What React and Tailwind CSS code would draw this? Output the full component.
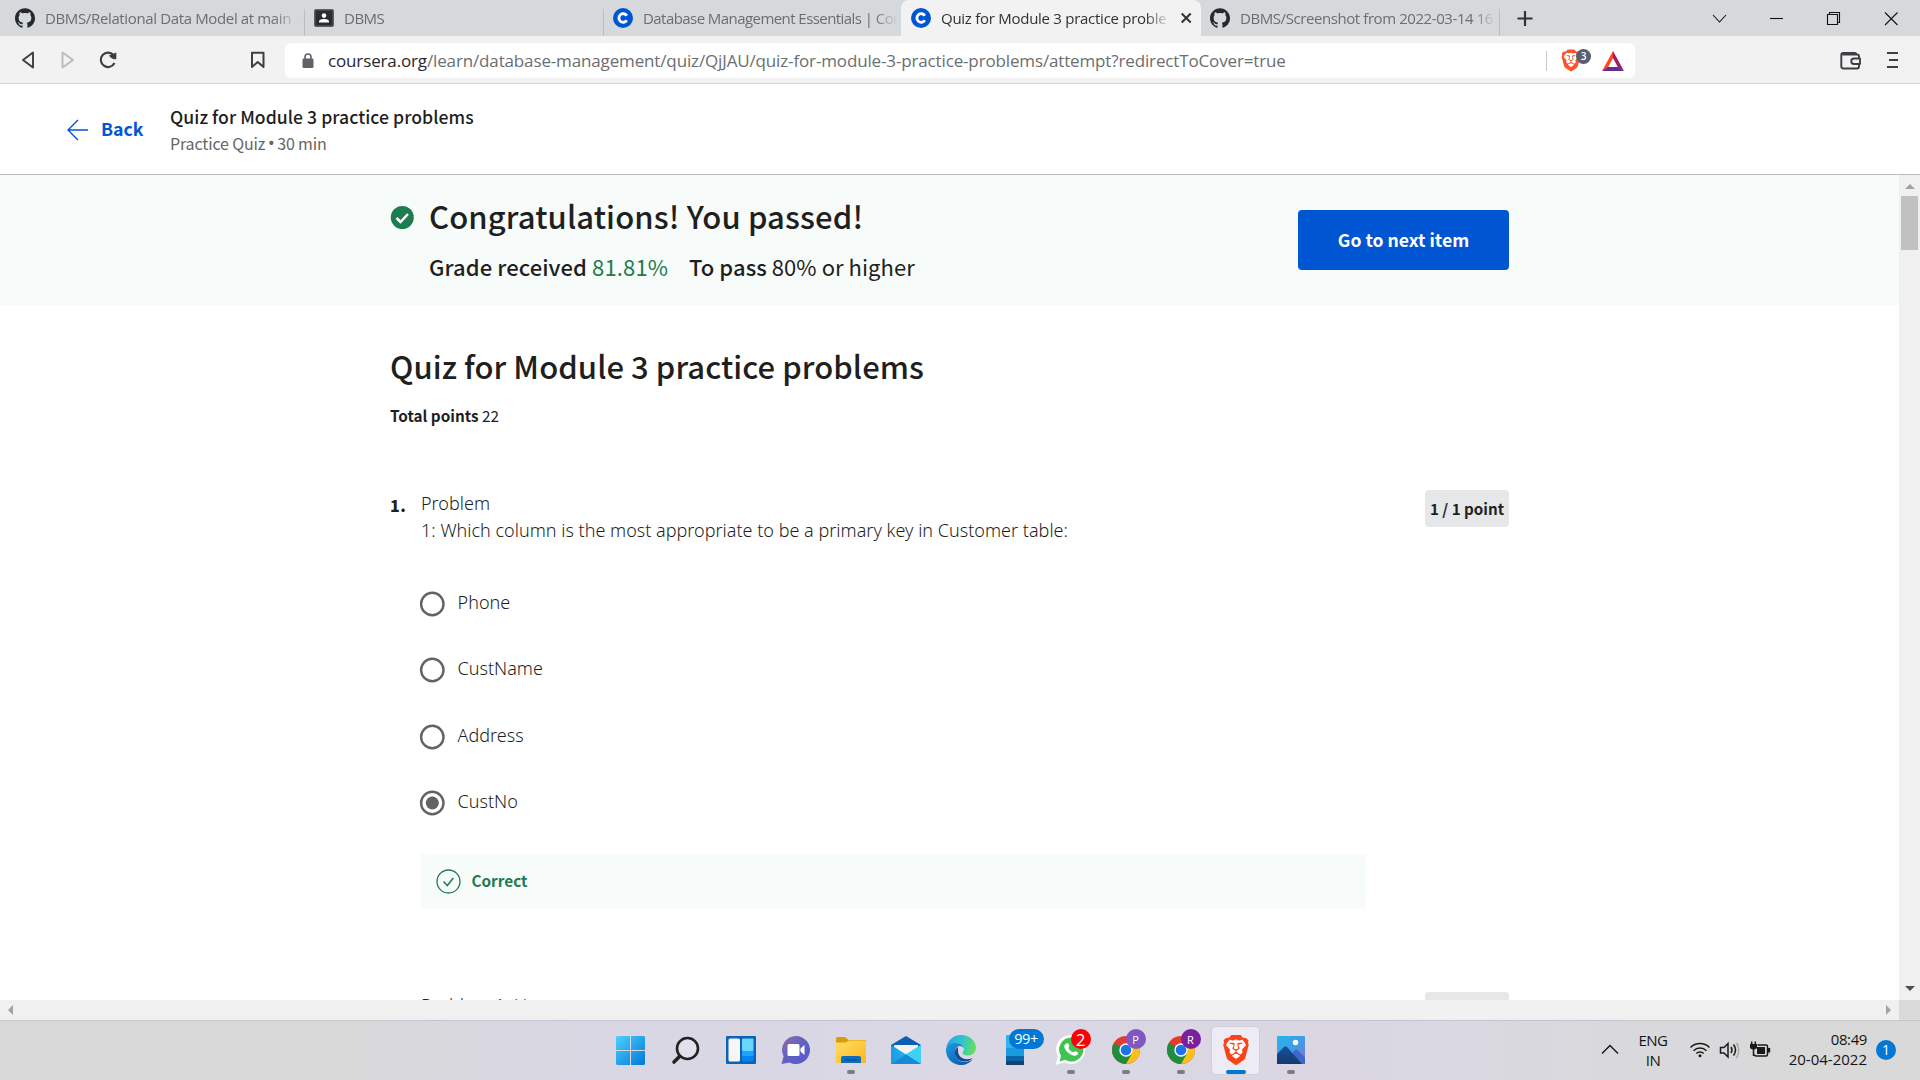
import React from 'react';
import { SiGithub, SiBrave } from 'react-icons/si';

const UI = "font-['Open_Sans','Noto_Sans',sans-serif]";
const SRC = "font-['Noto_Sans_CJK_SC','Noto_Sans',sans-serif]";
const BODY = "font-['Noto_Sans','Open_Sans',sans-serif]";

function CourseraIcon() {
  return (
    <svg width="20" height="20" viewBox="0 0 20 20" className="shrink-0">
      <circle cx="10" cy="10" r="10" fill="#0056d2" />
      <path d="M13.800 7.700A4.300 4.300 0 1 0 13.800 12.300" fill="none" stroke="#fff" strokeWidth="2.800" />
    </svg>
  );
}

function ContactIcon() {
  return (
    <svg width="20" height="18" viewBox="0 0 20 18" className="shrink-0">
      <rect width="20" height="18" rx="2" fill="#5c5f62" />
      <rect x="1.500" y="1.500" width="17" height="15" fill="#2a2c2e" />
      <circle cx="10" cy="6.600" r="2.300" fill="#fff" />
      <path d="M5 13.500v-1c0-1.800 3-2.500 5-2.500s5 .7 5 2.500v1z" fill="#fff" />
    </svg>
  );
}

function Tab({ icon, children, className }) {
  return (
    <div className={`flex h-[36px] shrink-0 items-center ${className}`}>
      {icon}
      <div className="ml-[10px] min-w-0 flex-1 overflow-hidden whitespace-nowrap leading-[22px] [mask-image:linear-gradient(to_right,black_calc(100%-24px),transparent)]">
        {children}
      </div>
    </div>
  );
}

function TabStrip() {
  return (
    <div className={`flex h-[36px] items-start bg-[#d5d9dc] text-[15px] text-[#6a6e72] ${UI}`}>
      <Tab className="w-[304px] pl-[15px] pr-[6px]" icon={<SiGithub size={20} color="#24292f" className="shrink-0" />}>
        <span className="tracking-[-0.36px]">DBMS/Relational Data Model at main ·</span>
      </Tab>
      <div className="mt-[9px] h-[27px] w-px bg-[#babfc3]" />
      <Tab className="w-[298px] pl-[9px] pr-[8px]" icon={<ContactIcon />}>
        <span className="tracking-[-0.5px]">DBMS</span>
      </Tab>
      <div className="mt-[9px] h-[27px] w-px bg-[#babfc3]" />
      <Tab className="w-[297px] pl-[9px] pr-[3px]" icon={<CourseraIcon />}>
        <span className="tracking-[-0.56px]">Database Management Essentials | Cou</span>
      </Tab>
      <div className="flex h-[36px] w-[300px] items-center rounded-t-[8px] bg-[#f2f2f2] text-[#303236]">
        <Tab className="w-[271px] pl-[10px] pr-[2px]" icon={<CourseraIcon />}>
          <span className="font-medium tracking-[-0.27px]">Quiz for Module 3 practice proble</span>
        </Tab>
        <svg width="28" height="20" viewBox="0 0 28 20">
          <path d="M9.700 5.500l9 9M18.700 5.500l-9 9" stroke="#303236" strokeWidth="2" />
        </svg>
      </div>
      <Tab className="w-[298px] pl-[9px] pr-[3px]" icon={<SiGithub size={20} color="#24292f" className="shrink-0" />}>
        <span className="tracking-[-0.42px]">DBMS/Screenshot from 2022-03-14 16</span>
      </Tab>
      <div className="mt-[9px] h-[27px] w-px bg-[#babfc3]" />
      <svg width="50" height="36" viewBox="0 0 50 36">
        <path d="M25 11v15M17.500 18.500h15" stroke="#303236" strokeWidth="2.200" />
      </svg>
      <svg width="226" height="36" viewBox="1694 0 226 36" className="ml-auto" fill="none" stroke="#111" strokeWidth="1.100">
        <path d="M1713 15l6.500 7 6.500-7" />
        <path d="M1770 18.500h13" />
        <path d="M1827.500 14.500h10v10h-10zM1829.500 14.500v-2h10v10h-2" />
        <path d="M1885 12.500l12.500 12.500M1897.500 12.500l-12.500 12.500" />
      </svg>
    </div>
  );
}

function Toolbar() {
  return (
    <div className={`flex h-[48px] items-center border-b border-[#d3d5d6] bg-[#f2f2f2] pt-[2px] ${UI}`}>
      <svg width="285" height="35" viewBox="0 43 285 35" fill="none" strokeWidth="1.900" strokeLinejoin="round">
        <path d="M33 52.500v15L23 60z" stroke="#3b3e42" />
        <path d="M62.500 52.500v15l10.500-7.500z" stroke="#b9bbbd" />
        <path d="M113.800 55.500A7.200 7.200 0 1 0 114.500 63" stroke="#3b3e42" strokeWidth="2.200" />
        <path d="M109 55.500l7.300-3v6.500c-3 .8-5.500-1-7.300-3.500z" fill="#3b3e42" />
        <path d="M252 52.800h11.500V67l-5.750-5-5.750 5z" stroke="#3b3e42" strokeWidth="2" />
      </svg>
      <div className="flex h-[35px] w-[1350px] items-center rounded-[6px] bg-white">
        <svg width="12" height="16" viewBox="0 0 12 16" className="ml-[17px]">
          <rect x="0.500" y="5.500" width="11" height="9.500" rx="1.300" fill="#5f6368" />
          <path d="M3 6V4a3 3 0 0 1 6 0v2" fill="none" stroke="#5f6368" strokeWidth="1.600" />
        </svg>
        <div className="ml-[14px] flex-1 whitespace-nowrap pt-px text-[17px] leading-[26px] tracking-[-0.143px] text-[#6b6e72]">
          <span className="text-[#27292c]">coursera.org</span>/learn/database-management/quiz/QjJAU/quiz-for-module-3-practice-problems/attempt?redirectToCover=true
        </div>
        <div className="h-[20px] w-px bg-[#c6c8ca]" />
        <div className="relative ml-[13px] flex h-[24px] w-[22px] items-center justify-center">
          <svg width="20" height="24" viewBox="0 0 20 24" className="absolute left-px top-0">
            <path d="M3 5h14v9l-7 7-7-7z" fill="#fff" />
          </svg>
          <SiBrave size={23} color="#fb542b" className="relative" />
          <div className="absolute left-[16px] top-[0px] flex h-[15px] w-[15px] items-center justify-center rounded-full bg-[#5b5d70] text-[10px] font-semibold leading-none text-white">3</div>
        </div>
        <svg width="22" height="20" viewBox="0 0 22 20" className="ml-[20px] mr-[11px]">
          <path d="M11 0L0 20l6-3.500L11 7z" fill="#ff4724" />
          <path d="M11 0l11 20-6-3.500L11 7z" fill="#9e1f63" />
          <path d="M0 20h22l-6-4H6z" fill="#662d91" />
        </svg>
      </div>
      <svg width="80" height="35" viewBox="1830 43 80 35" className="ml-auto mr-[10px]" fill="none" stroke="#3b3e42" strokeWidth="1.900" strokeLinejoin="round">
        <path d="M1859 58v-1.500a2 2 0 0 0-2-2h-14.500M1859 64v2.500a2 2 0 0 1-2 2h-13.500a2.200 2.200 0 0 1-2.200-2.200V55a2 2 0 0 1 2-2h11.500a2 2 0 0 1 2 1.700" />
        <path d="M1860 58.500h-6a2.500 2.500 0 0 0 0 5.500h6z" />
        <path d="M1887 53h11M1889 60h9M1887 67h11" strokeWidth="2" />
      </svg>
    </div>
  );
}

function QuizHeader() {
  return (
    <header className={`flex h-[91px] border-b border-[#b9bbbb] bg-white ${SRC}`}>
      <svg width="22" height="22" viewBox="0 0 22 22" fill="none" stroke="#0056d2" strokeWidth="1.400" className="ml-[67px] mt-[34.500px]">
        <path d="M1 11h20M11 1L1 11l10 10" />
      </svg>
      <div className="ml-[12px] mt-[29px] w-[69px] text-[17.700px] font-bold leading-[30px] text-[#0056d2]">Back</div>
      <div className="mt-[19px]">
        <div className="text-[17.600px] font-medium leading-[27px] tracking-[0.050px] text-[#1f1f1f]">Quiz for Module 3 practice problems</div>
        <div className="flex text-[16px] leading-[26px] tracking-[-0.150px] text-[#666]">
          <span>Practice Quiz</span>
          <span className="w-[12px] text-center font-['Open_Sans',sans-serif] text-[19px]">•</span>
          <span>30 min</span>
        </div>
      </div>
    </header>
  );
}

function Banner() {
  return (
    <section className={`flex h-[130px] bg-[#f7fbf9] pl-[390px] text-[#1f1f1f] ${SRC}`}>
      <svg width="24" height="24" viewBox="0 0 24 24" className="mt-[30px] shrink-0">
        <circle cx="12.300" cy="12.500" r="11.500" fill="#1d7c50" />
        <path d="M6.500 13l4 4 7.500-8" fill="none" stroke="#fff" strokeWidth="2.500" />
      </svg>
      <div className="ml-[15px] w-[869px] pt-[21px]">
        <h1 className="text-[31px] font-medium leading-[40px] tracking-[0.120px]">Congratulations! You passed!</h1>
        <div className="mt-[14px] flex whitespace-nowrap text-[22px] leading-[32px]">
          <div className="w-[260px]">
            <span className="font-medium tracking-[0.100px]">Grade received</span> <span className="tracking-[0.150px] text-[#1d7c50]">81.81%</span>
          </div>
          <div className="tracking-[0.050px]">
            <span className="font-medium">To pass</span> 80% or higher
          </div>
        </div>
      </div>
      <button className="mt-[35px] h-[60px] w-[211px] rounded-[4px] bg-[#0056d2] text-[17.600px] font-bold text-white">
        Go to next item
      </button>
    </section>
  );
}

function Radio({ on }) {
  return (
    <svg width="26" height="26" viewBox="0 0 26 26" className="shrink-0">
      <circle cx="13.300" cy="13" r="11.200" fill="none" stroke="#636363" strokeWidth="2.400" />
      {on && <circle cx="13.300" cy="13" r="6.500" fill="#636363" />}
    </svg>
  );
}

function PointBadge() {
  return (
    <div className={`ml-auto flex h-[37px] w-[84px] items-center justify-center rounded-[4px] bg-[#e5e7e8] text-[15.200px] font-bold text-[#1f1f1f] ${SRC}`}>
      1 / 1 point
    </div>
  );
}

const OPTIONS = ['Phone', 'CustName', 'Address', 'CustNo'];

function Quiz() {
  return (
    <section className="ml-[390px] w-[1119px] text-[#1f1f1f]">
      <h2 className={`mt-[41px] text-[31px] font-medium leading-[40px] tracking-[0.060px] ${SRC}`}>Quiz for Module 3 practice problems</h2>
      <div className={`mt-[17px] text-[15.300px] leading-[24px] ${SRC}`}>
        <span className="font-bold">Total points</span> 22
      </div>
      <div className="mt-[63px] flex items-start">
        <div className={`w-[31px] pt-[2px] text-[16px] font-black leading-[27px] tracking-[0.600px] ${SRC}`}>1.</div>
        <div className={`whitespace-pre-line text-[18px] font-light leading-[27px] tracking-[0.010px] ${BODY}`}>
          Problem{'\n'}1: Which column is the most appropriate to be a primary key in Customer table:
        </div>
        <PointBadge />
      </div>
      <div className="ml-[29px] mt-[26.800px]">
        {OPTIONS.map((o) => (
          <label key={o} className="flex h-[66.400px] items-center">
            <Radio on={o === 'CustNo'} />
            <span className={`ml-[12.600px] pb-[3px] text-[18px] font-light leading-[27px] ${BODY}`}>{o}</span>
          </label>
        ))}
      </div>
      <div className="ml-[31px] mt-[17.600px] flex h-[55px] w-[945px] items-center bg-[#f7fbf9] pl-[15px] text-[#1d7c50]">
        <svg width="25" height="25" viewBox="0 0 25 25" fill="none" stroke="#1d7c50" strokeWidth="1.300">
          <circle cx="12.500" cy="12.500" r="11.500" />
          <path d="M7.500 12.500l3.800 4 6-7.500" strokeWidth="1.500" />
        </svg>
        <span className={`ml-[10.500px] pb-[2px] text-[15.300px] font-bold ${SRC}`}>Correct</span>
      </div>
      <div className="mt-[83px] flex items-start">
        <div className={`ml-[31px] text-[18px] font-light leading-[27px] ${BODY}`}>Problem 1: U</div>
        <PointBadge />
      </div>
    </section>
  );
}

function Badge({ children, className }) {
  return (
    <span className={`absolute flex items-center justify-center leading-none text-white ${UI} ${className}`}>{children}</span>
  );
}

function Task({ children, dot }) {
  return (
    <div className="flex h-[59px] w-[55px] flex-col items-center">
      <div className="relative mt-[13px] flex h-[32px] w-[32px] items-center justify-center">{children}</div>
      {dot && <div className="mt-[4px] h-[4px] w-[8px] rounded-full bg-[#7d7b82]" />}
    </div>
  );
}

function Chrome() {
  return (
    <svg width="28" height="28" viewBox="0 0 28 28">
      <circle cx="14" cy="14" r="14" fill="#e33b2e" />
      <path d="M14 14L1.900 7A14 14 0 0 0 14 28l6.100-10.500z" fill="#1e8e3e" />
      <path d="M14 14V7h12.100A14 14 0 0 1 14 28l6-10.500z" fill="#fbc116" />
      <circle cx="14" cy="14" r="6.700" fill="#fff" />
      <circle cx="14" cy="14" r="5.300" fill="#1a73e8" />
    </svg>
  );
}

function Taskbar() {
  return (
    <footer className={`flex h-[60px] border-t border-[#c6c5cd] bg-[linear-gradient(90deg,#d9d9d9_0%,#d9d9da_18%,#d9d7e3_30%,#dbd7e5_50%,#dad7e3_70%,#d9d9dc_86%,#d9d9d9_100%)] ${UI}`}>
      <svg width="0" height="0" className="absolute">
        <defs>
          <linearGradient id="win" gradientUnits="userSpaceOnUse" x1="0" y1="0" x2="29" y2="29"><stop offset="0" stopColor="#4fd0ff" /><stop offset="1" stopColor="#0078d4" /></linearGradient>
          <linearGradient id="chat" x1="0" y1="0" x2="1" y2="1"><stop offset="0" stopColor="#8f6aa8" /><stop offset="0.600" stopColor="#5b5fc7" /><stop offset="1" stopColor="#5a5bd0" /></linearGradient>
          <linearGradient id="fold" x1="0" y1="0" x2="1" y2="1"><stop offset="0" stopColor="#ffdc6b" /><stop offset="1" stopColor="#fbb917" /></linearGradient>
          <linearGradient id="mail" x1="0" y1="0" x2="1" y2="0"><stop offset="0" stopColor="#1b9de2" /><stop offset="1" stopColor="#2bc4f0" /></linearGradient>
          <linearGradient id="edgeTop" x1="0" y1="0.300" x2="1" y2="0.500"><stop offset="0" stopColor="#2aa5e0" /><stop offset="0.500" stopColor="#2fc3cf" /><stop offset="1" stopColor="#66e05c" /></linearGradient>
          <linearGradient id="edgeBot" x1="0" y1="0" x2="1" y2="1"><stop offset="0" stopColor="#1a9be6" /><stop offset="1" stopColor="#0c4d9e" /></linearGradient>
          <linearGradient id="photo" x1="0" y1="0" x2="1" y2="1"><stop offset="0" stopColor="#26b3ee" /><stop offset="0.500" stopColor="#3d9fe6" /><stop offset="1" stopColor="#8a6fd0" /></linearGradient>
          <linearGradient id="mount" x1="0" y1="0" x2="0" y2="1"><stop offset="0" stopColor="#1c4f9c" /><stop offset="1" stopColor="#123a70" /></linearGradient>
        </defs>
      </svg>
      <div className="ml-[603px] flex">
        <Task>
          <svg width="29" height="29" viewBox="0 0 29 29" fill="url(#win)">
            <path d="M1 0h13v14H0V1zM15 0h13l1 1v13H15zM0 15h14v14H1l-1-1zM15 15h14v13l-1 1H15z" />
          </svg>
        </Task>
        <Task>
          <svg width="30" height="30" viewBox="0 0 30 30" fill="none" stroke="#222" strokeLinecap="round">
            <circle cx="16.500" cy="13.500" r="10.500" strokeWidth="2.600" fill="#e2e0e8" />
            <path d="M8.500 21.500L3 27" strokeWidth="3.600" />
          </svg>
        </Task>
        <Task>
          <svg width="30" height="28" viewBox="0 0 30 28">
            <rect width="30" height="28" rx="1" fill="#0b63b5" />
            <rect x="2.500" y="2.500" width="11.500" height="23" rx="1.500" fill="#f7f7f7" />
            <rect x="16" y="2.500" width="11.500" height="12.500" rx="1" fill="#69d6ff" />
            <rect x="16" y="15" width="11.500" height="5" fill="#1ba4ff" />
            <rect x="16" y="20" width="11.500" height="5.500" rx="1" fill="#0683ea" />
          </svg>
        </Task>
        <Task>
          <svg width="30" height="28" viewBox="0 0 30 28">
            <path d="M15 0a14 14 0 1 1-6.500 26.400L0.500 28l2.100-7.500A14 14 0 0 1 15 0z" fill="url(#chat)" />
            <rect x="6.500" y="8" width="12" height="12" rx="1.500" fill="#fff" />
            <path d="M19.500 12.500l4-3.500v10l-4-3.500z" fill="#fff" />
          </svg>
        </Task>
        <Task dot>
          <svg width="30" height="27" viewBox="0 0 30 27">
            <path d="M0 1.500Q0 0 1.500 0H9l3.500 3H30v4H0z" fill="#dd9b08" />
            <path d="M0 5.500h10l3-2H30V26H0z" fill="url(#fold)" />
            <path d="M5 26v-5q0-2 2-2h16q2 0 2 2v5z" fill="#0f6cbd" />
            <rect x="8.500" y="22.300" width="13" height="1.200" fill="#0a4a8a" />
          </svg>
        </Task>
        <Task>
          <svg width="30" height="28" viewBox="0 0 30 28">
            <path d="M0 9L15 0l15 9v5H0z" fill="#0a5fb4" />
            <path d="M3 9h24v9H3z" fill="#f2f2f2" />
            <path d="M0 9l15 9.500L30 9v19H0z" fill="url(#mail)" />
            <path d="M15 18.500L30 9v19z" fill="#3fd0f5" />
            <path d="M0 28h30L15 18.500z" fill="#1789d6" />
          </svg>
        </Task>
        <Task>
          <svg width="30" height="30" viewBox="0 0 30 30">
            <path d="M0.500 12C2 4.500 8 0 15 0c8.500 0 15 6 15 12.500 0 5-3.500 8-8 8-3.500 0-5.500-1-5.500-2.500 0-1 1.500-1.500 1.500-4 0-3-3-5.500-7-5.500-4 0-8.500 2-10.500 3.500z" fill="url(#edgeTop)" />
            <path d="M0 15c0-4 4-7 9.500-7 5 0 8.500 3 8.500 6 0-1.500-2-3-4-3-3.500 0-5 3.500-5 7 0 7 6.500 9.500 11 9 2.500-.3 5-1.500 6.500-2.500-2.500 3.500-7 5.500-11.500 5.500C6.500 30 0 23.500 0 15z" fill="url(#edgeBot)" />
            <path d="M12 12c-3 2-3.500 5-3 7.500 1 5 6 7.700 11 7 3-.5 6-2.500 6.500-3.500-1.500.8-3.500 1.200-5.500 1.200-5.500 0-9-4-9-8 0-2 0-3 0-4.200z" fill="#0e4c96" />
          </svg>
        </Task>
        <Task>
          <svg width="18" height="30" viewBox="0 0 18 30" className="mr-px">
            <rect width="18" height="30" rx="1" fill="#34b3e8" />
            <rect y="13" width="18" height="8.500" fill="#1a9be0" />
            <rect y="21" width="18" height="5.500" fill="#0b63a8" />
            <rect y="26" width="18" height="4" fill="#16406e" />
          </svg>
          <Badge className="left-[9px] top-[-5px] h-[20px] w-[35px] rounded-full bg-[#0078d4] text-[14.500px] tracking-[-0.500px]">99+</Badge>
        </Task>
        <Task dot>
          <svg width="32" height="32" viewBox="0 0 32 32" className="absolute">
            <path d="M16.500 1a14.500 14.500 0 1 1-7 27.500L.5 31l2.500-8.500A14.500 14.500 0 0 1 16.500 1z" fill="#fff" />
            <path d="M16.500 3.500a12 12 0 1 1-6.300 22.300L4.500 27.500 6 21.800A12 12 0 0 1 16.500 3.500z" fill="#3fc351" />
            <path d="M11.500 9.500c1.500-.6 2 0 2.800 2.300.4 1.200-1.300 1.700-.8 2.500 1 1.800 2.500 3.200 4.500 4 .9.400 1.400-1.400 2.300-1.100 2.500.9 3 1.300 2.700 2.300-.6 2-2.800 2.600-5 1.900-4-1.200-7-3.900-8.600-7.900-.6-1.600.3-3.400 2.100-4z" fill="#fff" />
          </svg>
          <Badge className="left-[16px] top-[-5px] h-[20px] w-[20px] rounded-full bg-[#fb0007] text-[17px]">2</Badge>
        </Task>
        <Task dot>
          <Chrome />
          <Badge className="left-[16px] top-[-5px] h-[20px] w-[20px] rounded-full bg-[#7e57c2] text-[11px] text-[#eadcff]">P</Badge>
        </Task>
        <Task dot>
          <Chrome />
          <Badge className="left-[16px] top-[-5px] h-[20px] w-[20px] rounded-full bg-[#7b1fa2] text-[11px] text-[#eadcff]">R</Badge>
        </Task>
        <div className="mx-[3px] mt-[5px] flex h-[49px] w-[49px] flex-col items-center rounded-[5px] border border-[#d3d0db] bg-[#edebf3]">
          <div className="relative mt-[7px] flex h-[32px] w-[32px] items-center justify-center">
            <svg width="24" height="28" viewBox="0 0 24 28" className="absolute">
              <path d="M4 5h16v12l-8 7-8-7z" fill="#fff" />
            </svg>
            <SiBrave size={30} color="#fb4319" className="relative" />
          </div>
          <div className="mt-[4px] h-[4px] w-[20px] rounded-full bg-[#0078d4]" />
        </div>
        <Task dot>
          <svg width="28" height="28" viewBox="0 0 28 28">
            <rect width="28" height="28" rx="1" fill="url(#photo)" />
            <path d="M13 20l5-6q1.300-1 2.500 0l7.500 7.500V28H13z" fill="#3f66c9" />
            <path d="M0 18l7-7q1.500-1.300 3 0l15 17H0z" fill="url(#mount)" />
            <circle cx="18.500" cy="6.500" r="2.700" fill="#fff" />
          </svg>
        </Task>
      </div>
      <div className="ml-auto flex items-start text-[15px] leading-[20px] text-[#151515]">
        <svg width="20" height="60" viewBox="1600 1020 20 60" fill="none" stroke="#151515" strokeWidth="1.400" className="-mt-px">
          <path d="M1602 1053.500l8-8 8 8" />
        </svg>
        <div className="ml-[15px] mt-[9px] w-[36px] text-center tracking-[-0.500px]">
          <div>ENG</div>
          <div>IN</div>
        </div>
        <svg width="90" height="60" viewBox="1685 1020 90 60" fill="none" stroke="#1a1a1a" strokeWidth="1.500" className="-mt-px ml-[14px]">
          <path d="M1690.500 1047.500a13.500 13.500 0 0 1 19 0M1693.500 1050.700a9.300 9.300 0 0 1 13 0M1696.300 1053.500a5.200 5.200 0 0 1 7.400 0" />
          <circle cx="1700" cy="1055.800" r="1.500" fill="#1a1a1a" stroke="none" />
          <path d="M1720.500 1047.500h3.500l4-4v13.500l-4-4h-3.500z" />
          <path d="M1731 1047q2 3 0 6M1733.500 1044.500q4 5.500 0 11" />
          <path d="M1736.500 1043q4.500 7.500 0 15" stroke="#a9a9ab" />
          <path d="M1757.500 1045h8.500q1.500 0 1.500 1.500v8q0 1.500-1.500 1.500h-10q-1.500 0-1.500-1.500" />
          <rect x="1757" y="1047" width="8" height="7" fill="#1a1a1a" stroke="none" />
          <rect x="1768" y="1048" width="2.200" height="4.500" fill="#1a1a1a" stroke="none" />
          <path d="M1750 1044h7v3.500q0 1.500-3.500 2-3.500-.5-3.500-2z" fill="#1a1a1a" stroke="none" />
          <path d="M1751.700 1041.500v3M1755.300 1041.500v3M1753.500 1049v7" />
        </svg>
        <div className="ml-[6px] mt-[8px] w-[86px] text-right">
          <div className="tracking-[-0.400px]">08:49</div>
          <div>20-04-2022</div>
        </div>
        <div className="ml-[9px] mr-[24px] mt-[19px] flex h-[20px] w-[20px] items-center justify-center rounded-full bg-[#0078d4] text-[14px] leading-none text-white">1</div>
      </div>
    </footer>
  );
}

export default function App() {
  return (
    <div className="flex h-[1080px] w-[1920px] flex-col overflow-hidden bg-white">
      <TabStrip />
      <Toolbar />
      <QuizHeader />
      <div className="flex h-[825px]">
        <main className="w-[1899px] overflow-hidden">
          <Banner />
          <Quiz />
        </main>
        <div className="flex w-[21px] flex-col items-center bg-[#f0f0f0]">
          <svg width="10" height="5" viewBox="0 0 10 5" className="mt-[9px]"><path d="M0 5l5-5 5 5z" fill="#a3a3a3" /></svg>
          <div className="mt-[7px] h-[54px] w-[17px] bg-[#c1c1c1]" />
          <svg width="10" height="5" viewBox="0 0 10 5" className="mb-[9px] mt-auto"><path d="M0 0h10L5 5z" fill="#505050" /></svg>
        </div>
      </div>
      <div className="flex h-[20px] bg-[#f0f0f0]">
        <div className="flex w-[1899px] items-center justify-between pl-[8px] pr-[8px]">
          <svg width="5" height="10" viewBox="0 0 5 10"><path d="M5 0v10L0 5z" fill="#a3a3a3" /></svg>
          <svg width="5" height="10" viewBox="0 0 5 10"><path d="M0 0v10l5-5z" fill="#a3a3a3" /></svg>
        </div>
        <div className="w-[21px] bg-[#dadada]" />
      </div>
      <Taskbar />
    </div>
  );
}
